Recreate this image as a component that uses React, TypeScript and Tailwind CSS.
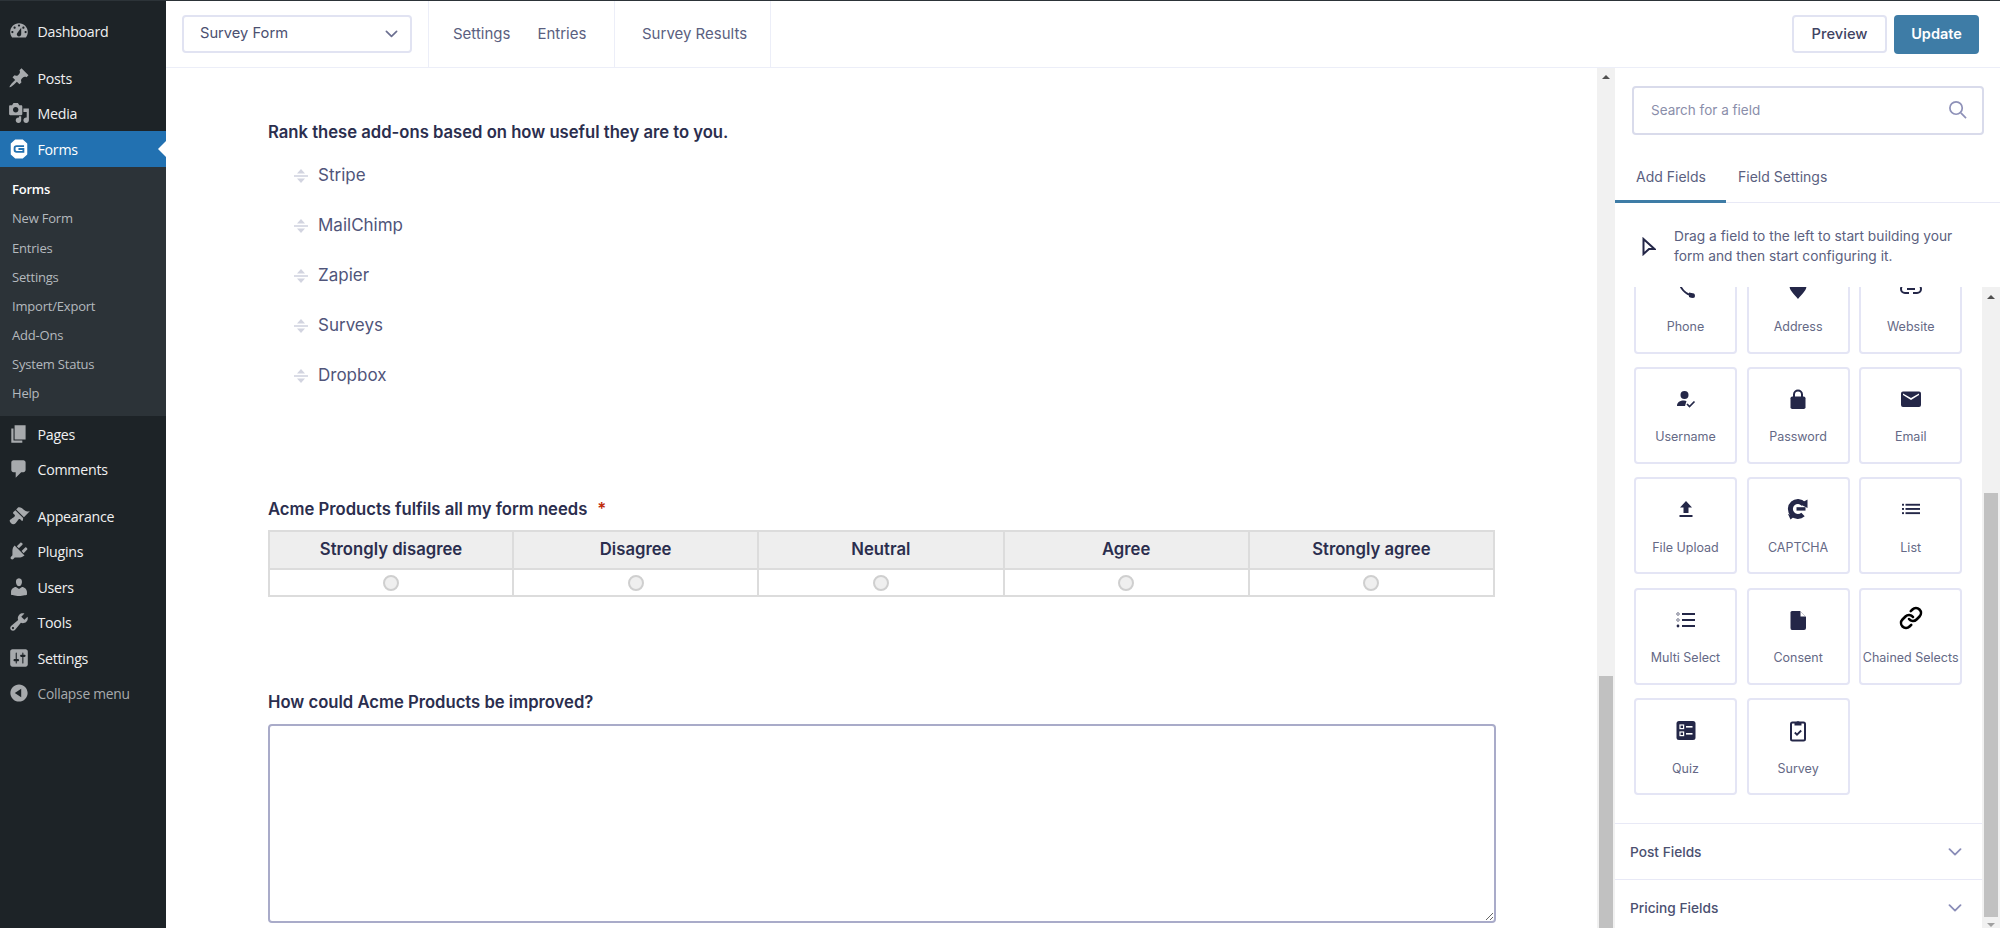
import React from "react";
import { Link as LinkIcon } from "lucide-react";

const D = (d: string, cls = "w-[22px] h-[22px]") => (
  <svg viewBox="0 0 20 20" className={cls} fill="currentColor"><path d={d} /></svg>
);

const wp = {
  dashboard: "M3.76 16h12.48c1.1-1.37 1.76-3.11 1.76-5 0-4.42-3.58-8-8-8s-8 3.58-8 8c0 1.89.66 3.63 1.76 5zM10 4c.55 0 1 .45 1 1s-.45 1-1 1-1-.45-1-1 .45-1 1-1zM6 6c.55 0 1 .45 1 1s-.45 1-1 1-1-.45-1-1 .45-1 1-1zm8 0c.55 0 1 .45 1 1s-.45 1-1 1-1-.45-1-1 .45-1 1-1zm-5.37 5.55L12 7v6c0 1.1-.9 2-2 2s-2-.9-2-2c0-.57.24-1.08.63-1.45zM4 10c.55 0 1 .45 1 1s-.45 1-1 1-1-.45-1-1 .45-1 1-1zm12 0c.55 0 1 .45 1 1s-.45 1-1 1-1-.45-1-1 .45-1 1-1z",
  post: "M10.44 3.02l1.82-1.82 6.36 6.35-1.83 1.82c-1.05-.68-2.48-.57-3.41.36l-.75.75c-.92.93-1.04 2.35-.35 3.41l-1.83 1.82-2.41-2.41-2.8 2.79c-.42.42-3.38 2.71-3.8 2.29s1.86-3.39 2.28-3.81l2.79-2.79L4.1 9.36l1.83-1.82c1.05.69 2.48.57 3.4-.36l.75-.75c.93-.92 1.05-2.35.36-3.41z",
  media: "M13 11V4c0-.55-.45-1-1-1h-1.67L9 1H5L3.67 3H2c-.55 0-1 .45-1 1v7c0 .55.45 1 1 1h10c.55 0 1-.45 1-1zM7 4.5c1.38 0 2.5 1.12 2.5 2.5S8.38 9.5 7 9.5 4.5 8.38 4.5 7 5.62 4.5 7 4.5zM14 6h5v10.5c0 1.38-1.12 2.5-2.5 2.5S14 17.88 14 16.5s1.12-2.5 2.5-2.5c.17 0 .34.02.5.05V9h-3V6zm-4 8.05V13h2v3.5c0 1.38-1.12 2.5-2.5 2.5S7 17.88 7 16.5 8.12 14 9.5 14c.17 0 .34.02.5.05z",
  page: "M6 15V2h10v13H6zm-1 1h8v2H3V5h2v11z",
  comments: "M5 2h9c1.1 0 2 .9 2 2v7c0 1.1-.9 2-2 2h-2l-5 5v-5H5c-1.1 0-2-.9-2-2V4c0-1.1.9-2 2-2z",
  appearance: "M14.48 11.06L7.41 3.99l1.5-1.5c.5-.56 2.3-.47 3.51.32 1.21.8 1.43 1.28 2.91 2.1 1.18.64 2.45 1.26 4.45.85zm-.71.71L6.7 4.7 4.93 6.47c-.39.39-.39 1.02 0 1.41l1.06 1.06c.39.39.39 1.03 0 1.42-.6.6-1.43 1.11-2.21 1.69-.35.26-.7.53-1.01.84C1.43 13.23.91 14.81 2.58 16.47c1.67 1.67 3.25 1.14 4.59-.19.31-.31.58-.66.84-1.01.58-.78 1.09-1.61 1.69-2.21.39-.39 1.02-.39 1.41 0l1.06 1.06c.39.39 1.02.39 1.41 0z",
  plugins: "M13.11 4.36L9.87 7.6 8 5.73l3.24-3.24c.35-.34 1.05-.2 1.56.32.52.51.66 1.21.31 1.55zm-8 1.77l.91-1.12 9.01 9.01-1.19.84c-.71.71-2.63 1.16-3.82 1.16H6.14L4.9 17.26c-.59.59-1.54.59-2.12 0-.59-.58-.59-1.53 0-2.12l1.24-1.24v-3.88c0-1.13.4-3.19 1.09-3.89zm7.26 3.97l3.24-3.24c.34-.35 1.04-.21 1.55.31.52.51.66 1.21.31 1.55l-3.24 3.25z",
  users: "M10 9.25c-2.27 0-2.73-3.44-2.73-3.44C7 4.02 7.82 2 9.97 2c2.16 0 2.98 2.02 2.71 3.81 0 0-.41 3.44-2.68 3.44zm0 2.57L12.72 10c2.39 0 4.52 2.33 4.52 4.53v2.49s-3.65 1.13-7.24 1.13c-3.65 0-7.24-1.13-7.24-1.13v-2.49c0-2.25 1.94-4.48 4.47-4.48z",
  tools: "M16.68 9.77c-1.34 1.34-3.3 1.67-4.95.99l-5.41 6.52c-.99.99-2.59.99-3.58 0s-.99-2.59 0-3.57l6.52-5.42c-.68-1.65-.35-3.61.99-4.95 1.28-1.28 3.12-1.62 4.72-1.06l-2.89 2.89 2.82 2.82 2.86-2.87c.53 1.58.18 3.39-1.08 4.65zM3.81 16.21c.4.39 1.04.39 1.43 0 .4-.4.4-1.04 0-1.43-.39-.4-1.03-.4-1.43 0-.39.39-.39 1.03 0 1.43z",
  settings: "M18 16V4c0-1.1-.9-2-2-2H4c-1.1 0-2 .9-2 2v12c0 1.1.9 2 2 2h12c1.1 0 2-.9 2-2zM8 11h1c.55 0 1 .45 1 1s-.45 1-1 1H8v1.5c0 .28-.22.5-.5.5s-.5-.22-.5-.5V13H6c-.55 0-1-.45-1-1s.45-1 1-1h1V5.5c0-.28.22-.5.5-.5s.5.22.5.5V11zm5-2h-1c-.55 0-1-.45-1-1s.45-1 1-1h1V5.5c0-.28.22-.5.5-.5s.5.22.5.5V7h1c.55 0 1 .45 1 1s-.45 1-1 1h-1v5.5c0 .28-.22.5-.5.5s-.5-.22-.5-.5V9z",
  collapse: "M10 2.16c4.33 0 7.84 3.51 7.84 7.84s-3.51 7.84-7.84 7.84S2.16 14.33 2.16 10 5.71 2.16 10 2.16zm2 11.72V6.12L6.18 9.97z",
};

function GravityIcon() {
  return (
    <svg viewBox="0 0 20 20" className="w-[22px] h-[22px]">
      <path d="M7 2 H13 L16.8 5.2 V14.8 L13 18 H7 L3.2 14.8 V5.2 Z" fill="#fff" stroke="#fff" strokeWidth="1.4" strokeLinejoin="round" />
      <path d="M14.6 7.4 H7.8 Q6 7.4 6 9 V11 Q6 12.6 7.8 12.6 H14 V10 H9.5" fill="none" stroke="#2271b1" strokeWidth="1.7" />
    </svg>
  );
}

function MenuRow({ icon, label, active, dim }: { icon: React.ReactNode; label: string; active?: boolean; dim?: boolean }) {
  return (
    <div className={active ? "relative flex items-center h-[36px] bg-[#2271b1] text-white" : "flex items-center h-[35.5px] text-[#f0f0f1]"}>
      <span className={active ? "w-[37.5px] pl-[8px] shrink-0 flex text-white" : "w-[37.5px] pl-[8px] shrink-0 flex text-[#a7aaad]"}>{icon}</span>
      <span className={dim ? "mt-[1.5px] text-[13.8px] font-['Open_Sans',sans-serif] tracking-[-0.25px] text-[#a7aaad]" : "mt-[1.5px] text-[14.2px] font-['Open_Sans',sans-serif] tracking-[-0.25px]"}>{label}</span>
      {active && <span className="absolute right-0 top-[10px] w-0 h-0 border-y-[8px] border-y-transparent border-r-[8px] border-r-white" />}
    </div>
  );
}

const sub = ["New Form", "Entries", "Settings", "Import/Export", "Add-Ons", "System Status", "Help"];

function Sidebar() {
  return (
    <aside className="w-[166px] shrink-0 bg-[#1d2327] flex flex-col pt-[12.5px]">
      <MenuRow icon={D(wp.dashboard)} label="Dashboard" />
      <div className="mt-[11px]" />
      <MenuRow icon={D(wp.post)} label="Posts" />
      <MenuRow icon={D(wp.media)} label="Media" />
      <MenuRow icon={<GravityIcon />} label="Forms" active />
      <div className="bg-[#2c3338] h-[249px] pt-[8.5px] font-['Open_Sans',sans-serif] text-[13px] tracking-[-0.2px]">
        <div className="h-[29.15px] pl-[12px] flex items-center text-white font-semibold">Forms</div>
        {sub.map((s) => (
          <div key={s} className="h-[29.15px] pl-[12px] flex items-center text-[#b4b9be]">{s}</div>
        ))}
      </div>
      <MenuRow icon={D(wp.page)} label="Pages" />
      <MenuRow icon={D(wp.comments)} label="Comments" />
      <div className="mt-[11px]" />
      <MenuRow icon={D(wp.appearance)} label="Appearance" />
      <MenuRow icon={D(wp.plugins)} label="Plugins" />
      <MenuRow icon={D(wp.users)} label="Users" />
      <MenuRow icon={D(wp.tools)} label="Tools" />
      <MenuRow icon={D(wp.settings)} label="Settings" />
      <MenuRow icon={D(wp.collapse)} label="Collapse menu" dim />
    </aside>
  );
}

function Chevron({ cls }: { cls: string }) {
  return (
    <svg viewBox="0 0 14 8" className={cls} fill="none" stroke="currentColor" strokeWidth="1.8" strokeLinecap="round" strokeLinejoin="round">
      <path d="M1.5 1.2 L7 6.6 L12.5 1.2" />
    </svg>
  );
}

function Header() {
  return (
    <header className="h-[67px] shrink-0 border-b border-[#eceef8] flex items-stretch text-[15px] text-[#5b5f80]">
      <div className="w-[263px] border-r border-[#eceef8] pl-[16px] flex items-center">
        <div className="w-[230px] h-[38px] -mt-[1px] border-2 border-[#e1e3f2] rounded-[4px] flex items-center justify-between pl-[16px] pr-[12px] text-[14.7px] text-[#4b5070]">
          <span>Survey Form</span>
          <Chevron cls="w-[13px] h-[8px] text-[#6b6f90]" />
        </div>
      </div>
      <div className="w-[186px] border-r border-[#eceef8] pl-[24px] flex items-center gap-[27px]">
        <span>Settings</span>
        <span>Entries</span>
      </div>
      <div className="w-[156px] border-r border-[#eceef8] pl-[27px] flex items-center">
        <span>Survey Results</span>
      </div>
      <div className="flex-1 flex items-center justify-end gap-[7px] pr-[21px]">
        <div className="w-[95px] h-[38px] border-2 border-[#e1e3f2] rounded-[4px] flex items-center justify-center text-[14.7px] text-[#3f4463] font-medium">Preview</div>
        <div className="w-[85px] h-[39px] rounded-[4px] bg-[#3e7ca6] flex items-center justify-center text-[14.5px] text-white font-semibold">Update</div>
      </div>
    </header>
  );
}

function Handle() {
  return (
    <svg viewBox="0 0 14 16" className="w-[14px] h-[16px] text-[#d2d4e0]" fill="currentColor">
      <path d="M7 1 L11 5.5 H3 Z" />
      <rect x="0" y="7.2" width="14" height="1.6" />
      <path d="M7 15 L3 10.5 H11 Z" />
    </svg>
  );
}

const rankItems = ["Stripe", "MailChimp", "Zapier", "Surveys", "Dropbox"];
const scale = ["Strongly disagree", "Disagree", "Neutral", "Agree", "Strongly agree"];

function Content() {
  return (
    <div className="w-[1431px] shrink-0 overflow-hidden pl-[102px] pt-[51.5px] text-[#2b2e4e]">
      <div className="h-[24px] leading-[24px] text-[16.65px] font-semibold">Rank these add-ons based on how useful they are to you.</div>
      <ul className="mt-[7.5px]">
        {rankItems.map((r) => (
          <li key={r} className="h-[50px] flex items-center pl-[26px] gap-[10px] text-[17px] text-[#50557a]">
            <Handle />
            <span>{r}</span>
          </li>
        ))}
      </ul>
      <div className="mt-[96px] h-[24px] leading-[24px] text-[16.65px] font-semibold">
        Acme Products fulfils all my form needs<span className="ml-[10px] text-[#c02b0a]">*</span>
      </div>
      <table className="mt-[9px] w-[1227px] table-fixed border-collapse border-2 border-[#dcdcdc]">
        <thead>
          <tr className="h-[38px] bg-[#eeeeee]">
            <th className="w-[244px] border-2 border-[#dcdcdc] pb-[1px] text-[16.7px] font-semibold">{scale[0]}</th>
            {scale.slice(1).map((s) => (
              <th key={s} className="border-2 border-[#dcdcdc] pb-[1px] text-[16.7px] font-semibold">{s}</th>
            ))}
          </tr>
        </thead>
        <tbody>
          <tr className="h-[27px]">
            {scale.map((s) => (
              <td key={s} className="border-2 border-[#dcdcdc] text-center p-0">
                <input type="radio" aria-label={s} className="appearance-none block mx-auto w-[16px] h-[16px] rounded-full border-2 border-[#cfcfcf] bg-[#efefef]" />
              </td>
            ))}
          </tr>
        </tbody>
      </table>
      <div className="mt-[93px] h-[24px] leading-[24px] text-[16.65px] font-semibold">How could Acme Products be improved?</div>
      <textarea aria-label="How could Acme Products be improved?" className="block mt-[9.5px] w-[1228px] h-[199px] border-2 border-[#a9abc9] rounded-[4px] bg-white" />
    </div>
  );
}

function ArrowUp() {
  return <svg viewBox="0 0 8 4" className="w-[8px] h-[4px] text-[#505050]" fill="currentColor"><path d="M4 0 L8 4 H0 Z" /></svg>;
}
function ArrowDown() {
  return <svg viewBox="0 0 8 4" className="w-[8px] h-[4px] text-[#a0a0a0]" fill="currentColor"><path d="M0 0 H8 L4 4 Z" /></svg>;
}

function V({ children }: { children: React.ReactNode }) {
  return <svg viewBox="0 0 24 24" className="w-[24px] h-[24px] text-[#242748]" fill="currentColor">{children}</svg>;
}

const icons: Record<string, React.ReactNode> = {
  Phone: <V><path d="M5 4 C6 11 11 17 19 19" fill="none" stroke="currentColor" strokeWidth="2" /><path d="M15 15.5 L20 16.5 Q21 17 21 19 Q21 21 19 21 Q17 21 15 20 Z" /></V>,
  Address: <V><path d="M12 22 C8 17 3.5 13.5 3.5 9 A8.5 8.5 0 0 1 20.5 9 C20.5 13.5 16 17 12 22 Z" /></V>,
  Website: <V><path d="M8 8 H6 A4 4 0 0 0 6 16 H10 M16 8 H18 A4 4 0 0 1 18 16 H14 M8 12 H16" fill="none" stroke="currentColor" strokeWidth="2" /></V>,
  Username: <V><circle cx="10.5" cy="8" r="4" /><path d="M3 19 C3 15 6 13.5 10 13.5 L12.5 14 L11 19 Z" /><path d="M13 17 L15.5 19.5 L20.5 14.5" fill="none" stroke="currentColor" strokeWidth="1.7" /></V>,
  Password: <V><path d="M8 11 V7.5 A4 4 0 0 1 16 7.5 V11" fill="none" stroke="currentColor" strokeWidth="2" /><rect x="4.5" y="9.5" width="15" height="12.5" rx="1.8" /></V>,
  Email: <V><path d="M4 4.5 H20 Q22 4.5 22 6.5 V18 Q22 20 20 20 H4 Q2 20 2 18 V6.5 Q2 4.5 4 4.5 Z M4 8 L12 13 L20 8 V6.5 L12 11 L4 6.5 Z" fillRule="evenodd" /></V>,
  "File Upload": <V><path d="M12 4 L18 10.5 H14.5 V16 H9.5 V10.5 H6 Z" /><rect x="5.5" y="18" width="13" height="2" /></V>,
  CAPTCHA: <V><path d="M17.5 7 A7.5 7.5 0 1 0 17 17.5" fill="none" stroke="currentColor" strokeWidth="5" /><path d="M13.5 7 L21.5 2.5 L21.5 11 Z" /><rect x="10.5" y="10.2" width="9" height="3.4" /><path d="M2 17 L9 19 L4.5 22.5 Z" /></V>,
  List: <V><rect x="3" y="6.8" width="2" height="1.9" /><rect x="3" y="11" width="2" height="1.9" /><rect x="3" y="15.2" width="2" height="1.9" /><rect x="6.5" y="6.8" width="14.5" height="1.9" /><rect x="6.5" y="11" width="14.5" height="1.9" /><rect x="6.5" y="15.2" width="14.5" height="1.9" /></V>,
  "Multi Select": <V><circle cx="4" cy="6" r="1.3" fill="none" stroke="currentColor" strokeWidth="0.6" /><circle cx="4" cy="12" r="1.3" fill="none" stroke="currentColor" strokeWidth="0.6" /><circle cx="4" cy="18" r="1.4" /><rect x="8" y="5" width="13" height="2" /><rect x="8" y="11" width="13" height="2" /><rect x="8" y="17" width="13" height="2" /></V>,
  Consent: <V><path d="M6 3 H14 L20 9 V20 Q20 22 18 22 H6 Q4.5 22 4.5 20 V4.5 Q4.5 3 6 3 Z" /><path d="M14.5 3.5 L19.5 8.5 H14.5 Z" fill="#fff" /></V>,
  "Chained Selects": <LinkIcon className="w-[24px] h-[24px] text-black -mt-[3px]" strokeWidth={2.6} />,
  Quiz: <V><rect x="2.5" y="3" width="19" height="19" rx="2.5" /><rect x="6" y="7" width="3.6" height="3.6" fill="none" stroke="#fff" strokeWidth="1.2" /><rect x="6" y="14" width="3.6" height="3.6" fill="none" stroke="#fff" strokeWidth="1.2" /><rect x="12" y="8" width="6.5" height="1.6" fill="#fff" /><rect x="12" y="15" width="6.5" height="1.6" fill="#fff" /></V>,
  Survey: <V><rect x="5" y="4.5" width="14" height="18" rx="1.5" fill="none" stroke="currentColor" strokeWidth="2" /><path d="M8.5 7.5 V4.5 H10.2 A1.9 1.9 0 0 1 13.8 4.5 H15.5 V7.5 Z" /><path d="M8.8 14.5 L11 16.7 L15.2 12.5" fill="none" stroke="currentColor" strokeWidth="1.8" /></V>,
};

const fields = ["Phone", "Address", "Website", "Username", "Password", "Email", "File Upload", "CAPTCHA", "List", "Multi Select", "Consent", "Chained Selects", "Quiz", "Survey"];

function Panel() {
  return (
    <div className="flex-1 min-w-0 flex flex-col text-[#5b5f80] text-[14px]">
      <div className="pt-[18px] pl-[17px] shrink-0">
        <div className="w-[352px] h-[49px] border-2 border-[#d9dbeb] rounded-[4px] flex items-center justify-between pl-[17px] pr-[15px] pb-[1.5px] text-[13.5px] text-[#8a8eaa]">
          <span>Search for a field</span>
          <svg viewBox="0 0 20 20" className="w-[19px] h-[19px] text-[#8e91b8]" fill="none" stroke="currentColor" strokeWidth="1.8"><circle cx="8.5" cy="8.5" r="6.5" /><path d="M13.5 13.5 L19 19" /></svg>
        </div>
      </div>
      <div className="h-[68px] shrink-0 flex border-b border-[#e8e9f6]">
        <div className="w-[111px] h-[68px] pl-[21px] pt-[17px] flex items-center border-b-[3px] border-[#3e7ca6]">Add Fields</div>
        <div className="h-[68px] pl-[12px] pt-[17px] flex items-center border-b-[3px] border-transparent">Field Settings</div>
      </div>
      <div className="h-[84px] shrink-0 flex items-center pl-[27px] pt-[2px] leading-[20px] text-[13.75px]">
        <svg viewBox="0 0 14 19" className="w-[14px] h-[19px] shrink-0 text-[#242748]" fill="none" stroke="currentColor" strokeWidth="2" strokeLinejoin="miter"><path d="M1.5 2 L12.5 12 H7 L1.5 17 Z" /></svg>
        <p className="ml-[18px] w-[300px]">Drag a field to the left to start building your form and then start configuring it.</p>
      </div>
      <div className="flex-1 min-h-0 flex">
        <div className="w-[367px] shrink-0 overflow-hidden">
          <div className="-mt-[30.5px] ml-[19px] grid grid-cols-[103px_103px_103px] gap-x-[9.6px] gap-y-[13.4px]">
            {fields.map((f) => (
              <div key={f} className="h-[97px] border-2 border-[#e4e5f5] rounded-[4px] bg-white flex flex-col items-center pt-[18px] text-[12.5px] text-[#656986] whitespace-nowrap overflow-hidden">
                <div className="h-[24px] flex items-center justify-center">{icons[f]}</div>
                <div className="mt-[16.5px] leading-[20px]">{f}</div>
              </div>
            ))}
          </div>
          <div className="mt-[28px] h-[56px] border-t border-[#e8e9f6] flex items-center justify-between pl-[15px] pr-[20px] pt-[1px] font-medium text-[13.7px] text-[#4b5070]">
            <span>Post Fields</span>
            <Chevron cls="w-[14px] h-[8px] text-[#8a8db8]" />
          </div>
          <div className="h-[56px] border-t border-[#e8e9f6] flex items-center justify-between pl-[15px] pr-[20px] pt-[1px] font-medium text-[13.7px] text-[#4b5070]">
            <span>Pricing Fields</span>
            <Chevron cls="w-[14px] h-[8px] text-[#8a8db8]" />
          </div>
        </div>
        <div className="w-[18px] shrink-0 bg-[#f1f1f1] flex flex-col items-center pt-[8px]">
          <ArrowUp />
          <div className="mt-[194px] w-[14px] h-[424px] bg-[#c1c1c1]" />
          <div className="mt-[6px]"><ArrowDown /></div>
        </div>
      </div>
    </div>
  );
}

export default function App() {
  return (
    <div className="w-[2000px] h-[928px] overflow-hidden bg-white border-t border-[#2c3338] flex font-[Inter,sans-serif]">
      <Sidebar />
      <div className="flex-1 min-w-0 flex flex-col">
        <Header />
        <div className="flex-1 min-h-0 flex">
          <Content />
          <div className="w-[18px] shrink-0 bg-[#f1f1f1] flex flex-col items-center pt-[7px]">
            <ArrowUp />
            <div className="mt-[597px] w-[14px] flex-1 bg-[#c1c1c1]" />
          </div>
          <Panel />
        </div>
      </div>
    </div>
  );
}
